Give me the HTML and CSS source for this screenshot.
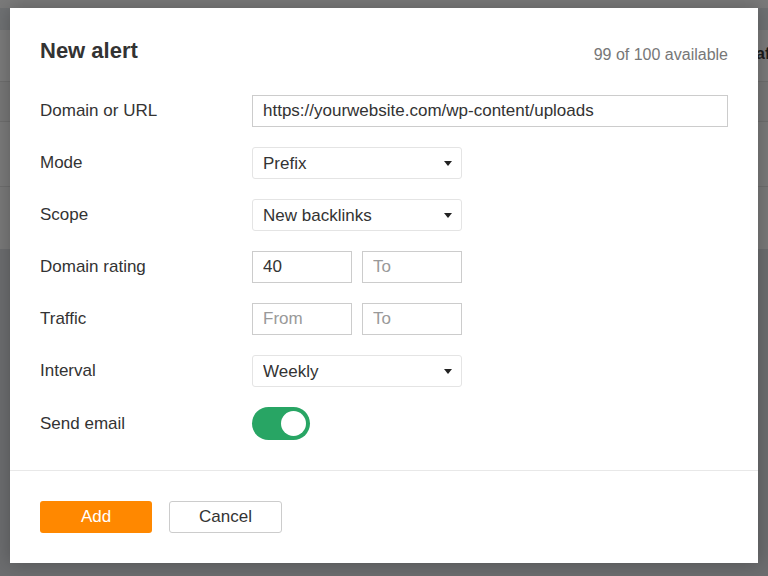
FILE: index.html
```html
<!DOCTYPE html>
<html lang="en">
<head>
    <meta charset="UTF-8">
    <meta name="viewport" content="width=device-width, initial-scale=1.0">
    <title>New alert</title>
    <link rel="stylesheet" href="styles.css">
</head>
<body>
    <div class="page">
        <div class="page-top"></div>
        <div class="page-nav"></div>
        <div class="page-row page-head"><span class="page-col">Traffic</span></div>
        <div class="page-row page-row-a"></div>
        <div class="page-row page-row-b"></div>
        <div class="page-row page-row-c"></div>
        <div class="page-rest"></div>
    </div>

    <div class="modal">
        <div class="modal-head">
            <h2>New alert</h2>
            <span class="quota">99 of 100 available</span>
        </div>
        <form class="modal-body">
            <div class="field">
                <label class="field-label" for="url">Domain or URL</label>
                <input class="input input-wide" type="text" id="url" value="https://yourwebsite.com/wp-content/uploads">
            </div>
            <div class="field">
                <label class="field-label" for="mode">Mode</label>
                <div class="select">
                    <select id="mode">
                        <option>Prefix</option>
                        <option>Exact URL</option>
                        <option>Domain</option>
                    </select>
                </div>
            </div>
            <div class="field">
                <label class="field-label" for="scope">Scope</label>
                <div class="select">
                    <select id="scope">
                        <option>New backlinks</option>
                        <option>Lost backlinks</option>
                    </select>
                </div>
            </div>
            <div class="field">
                <label class="field-label" for="drFrom">Domain rating</label>
                <div class="range">
                    <input class="input input-small" type="text" id="drFrom" value="40">
                    <input class="input input-small" type="text" placeholder="To">
                </div>
            </div>
            <div class="field">
                <label class="field-label" for="trFrom">Traffic</label>
                <div class="range">
                    <input class="input input-small" type="text" id="trFrom" placeholder="From">
                    <input class="input input-small" type="text" placeholder="To">
                </div>
            </div>
            <div class="field">
                <label class="field-label" for="interval">Interval</label>
                <div class="select">
                    <select id="interval">
                        <option>Weekly</option>
                        <option>Daily</option>
                        <option>Monthly</option>
                    </select>
                </div>
            </div>
            <div class="field">
                <span class="field-label">Send email</span>
                <span class="toggle on"><span class="knob"></span></span>
            </div>
        </form>
        <div class="modal-foot">
            <button type="button" class="btn btn-primary">Add</button>
            <button type="button" class="btn btn-default">Cancel</button>
        </div>
    </div>
</body>
</html>
```

FILE: styles.css
```css
body {
    margin: 0;
    font-family: "Liberation Sans", Arial, sans-serif;
    color: #333;
    background: #6c6d6f;
}
.page {
    height: 576px;
    overflow: hidden;
}
.page-top {
    height: 8px;
    background: #7a7a7a;
}
.page-nav {
    height: 22px;
    background: #6f7173;
}
.page-row {
    border-bottom: 1px solid #6e6e6e;
}
.page-head {
    height: 51px;
    background: #7b7b7b;
    display: flex;
    align-items: center;
}
.page-col {
    margin-left: 741px;
    margin-top: -3px;
    font-size: 16px;
    font-weight: bold;
    color: #1c1c1c;
    white-space: nowrap;
}
.page-row-a {
    height: 39px;
    background: #777;
}
.page-row-b {
    height: 64px;
    background: #7a7a7a;
}
.page-row-c {
    height: 62px;
    background: #797979;
    border-bottom: 0;
}
.page-rest {
    height: 326px;
    background: #6c6d6f;
}

.modal {
    position: absolute;
    left: 10px;
    top: 8px;
    width: 748px;
    height: 555px;
    background: #fff;
    box-shadow: 0 0 18px rgba(0, 0, 0, 0.25);
    display: flex;
    flex-direction: column;
}
.modal-head {
    display: flex;
    justify-content: space-between;
    align-items: baseline;
    padding: 28px 30px 0;
}
.modal-head h2 {
    margin: 0;
    font-size: 22px;
    line-height: 30px;
    font-weight: bold;
    color: #333;
}
.quota {
    font-size: 16px;
    color: #777;
    position: relative;
    top: 2px;
}
.modal-body {
    display: flex;
    flex-direction: column;
    gap: 20px;
    padding: 29px 30px 30px;
    margin: 0;
    border-bottom: 1px solid #e8e8e8;
}
.field {
    display: flex;
    align-items: center;
    min-height: 32px;
}
.field-label {
    width: 212px;
    flex-shrink: 0;
    font-size: 17px;
    color: #333;
}
.input {
    box-sizing: border-box;
    height: 32px;
    border: 1px solid #ccc;
    border-radius: 0;
    padding: 0 10px;
    font-family: inherit;
    font-size: 17px;
    color: #333;
    background: #fff;
    outline: none;
}
.input::placeholder {
    color: #999;
}
.input-wide {
    flex: 1;
}
.range {
    display: flex;
    gap: 10px;
}
.input-small {
    width: 100px;
}
.select {
    position: relative;
    width: 210px;
}
.select select {
    appearance: none;
    -webkit-appearance: none;
    box-sizing: border-box;
    width: 100%;
    height: 32px;
    border: 1px solid #e4e4e4;
    border-radius: 3px;
    padding: 0 30px 0 10px;
    font-family: inherit;
    font-size: 17px;
    color: #333;
    background: #fff;
    outline: none;
}
.select::after {
    content: "";
    position: absolute;
    right: 10px;
    top: 14px;
    border-left: 4px solid transparent;
    border-right: 4px solid transparent;
    border-top: 5px solid #222;
    pointer-events: none;
}
.toggle {
    position: relative;
    display: inline-block;
    width: 58px;
    height: 33px;
    border-radius: 17px;
    background: #ccc;
}
.toggle.on {
    background: #28a564;
}
.knob {
    position: absolute;
    top: 4px;
    left: 4px;
    width: 25px;
    height: 25px;
    border-radius: 50%;
    background: #fff;
}
.toggle.on .knob {
    left: 29px;
}
.modal-foot {
    display: flex;
    gap: 17px;
    padding: 30px;
}
.btn {
    box-sizing: border-box;
    height: 32px;
    border-radius: 3px;
    font-family: inherit;
    font-size: 17px;
    cursor: pointer;
}
.btn-primary {
    width: 112px;
    border: 0;
    background: #ff8800;
    color: #fff;
}
.btn-default {
    width: 113px;
    border: 1px solid #ccc;
    background: #fff;
    color: #333;
}
```
